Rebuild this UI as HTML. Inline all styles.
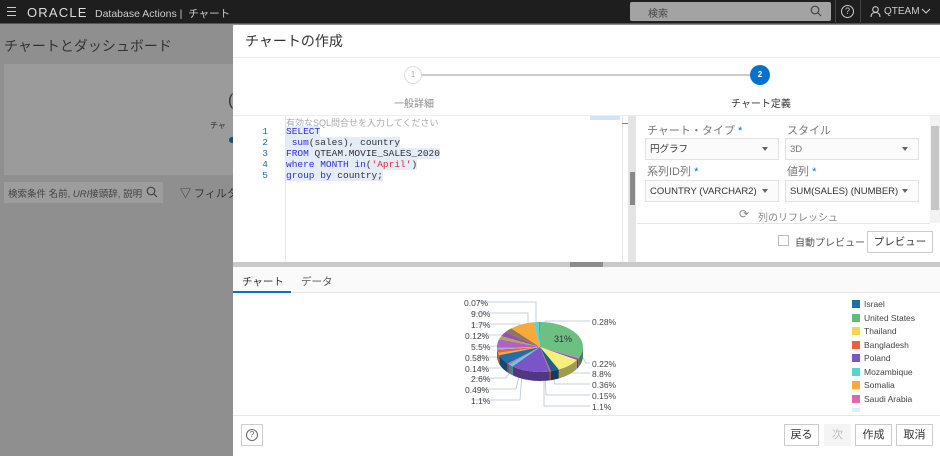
<!DOCTYPE html>
<html><head><meta charset="utf-8">
<style>
*{box-sizing:border-box;margin:0;padding:0}
body{width:940px;height:456px;overflow:hidden;background:#8f8f8f;font-family:"Liberation Sans","Noto Sans CJK JP",sans-serif;position:relative;color:#333}
.a{position:absolute}
.top{left:0;top:0;width:940px;height:24px;background:#1e1e1e;border-bottom:1px solid #555}
.mono{font-family:"Liberation Mono","Noto Sans CJK JP",monospace;font-size:9.5px}
.sel{position:absolute;height:22px;border:1px solid #e2e2e2;background:#fbfbfb;font-size:9.5px;color:#333;padding:5px 4px;line-height:12px;white-space:nowrap;overflow:hidden}
.sel:after{content:"";position:absolute;right:10px;top:8px;border:3.5px solid transparent;border-top:4.5px solid #666}
.lbl{position:absolute;font-size:11px;color:#777}
.star{color:#0572ce}
.btn{position:absolute;top:424px;height:22px;border:1px solid #ccc;background:#fff;font-size:11px;text-align:center;line-height:20px;color:#333}
.lg{position:absolute;left:852px;font-size:8.5px;color:#444}
.lg i{display:inline-block;width:8px;height:8px;margin-right:4px;vertical-align:-1px}
.pl{position:absolute;font-size:8.5px;color:#444}
</style></head><body>
<div class="a top"></div>
<div class="a" style="left:7px;top:7px;width:9px;height:9px;border-top:1.5px solid #ccc;border-bottom:1.5px solid #ccc"><div style="margin-top:2.5px;border-top:1.5px solid #ccc"></div></div>
<div class="a" style="left:27px;top:5px;color:#ddd;font-size:13px;letter-spacing:1.2px">ORACLE</div>
<div class="a" style="left:95px;top:6px;color:#ccc;font-size:10.5px">Database Actions |&nbsp; チャート</div>
<div class="a" style="left:630px;top:2px;width:201px;height:19px;background:#a3a3a3;border-radius:2px;font-size:10px;color:#444;padding:3px 18px">検索</div>
<svg class="a" style="left:810px;top:5px" width="12" height="12"><circle cx="5" cy="5" r="3.8" fill="none" stroke="#444" stroke-width="1.2"/><line x1="8" y1="8" x2="11" y2="11" stroke="#444" stroke-width="1.2"/></svg>
<div class="a" style="left:835px;top:0;width:1px;height:24px;background:#444"></div>
<div class="a" style="left:860px;top:0;width:1px;height:24px;background:#444"></div>
<div class="a" style="left:841px;top:5px;width:13px;height:13px;border:1.3px solid #ccc;border-radius:50%;font-size:9px;color:#ccc;text-align:center;line-height:11px">?</div>
<svg class="a" style="left:870px;top:6px" width="11" height="12"><circle cx="5.5" cy="3.5" r="2.8" fill="none" stroke="#ccc" stroke-width="1.1"/><path d="M1 11 Q1 6.5 5.5 6.5 Q10 6.5 10 11" fill="none" stroke="#ccc" stroke-width="1.1"/></svg>
<div class="a" style="left:884px;top:6px;color:#ccc;font-size:10px">QTEAM</div>
<svg class="a" style="left:921px;top:8px" width="10" height="7"><path d="M1 1 L5 5 L9 1" fill="none" stroke="#ccc" stroke-width="1.1"/></svg>

<div class="a" style="left:4px;top:36px;font-size:14px;color:#333">チャートとダッシュボード</div>
<div class="a" style="left:4px;top:64px;width:229px;height:111px;background:#9b9b9b"></div>
<div class="a" style="left:228px;top:92px;font-size:16px;color:#333">(</div>
<div class="a" style="left:210px;top:120px;font-size:8px;color:#333">チャ</div>
<div class="a" style="left:229px;top:137px;width:6px;height:6px;border-radius:50%;background:#1a4f70"></div>
<div class="a" style="left:4px;top:182px;width:159px;height:21px;background:#9d9d9d;font-size:9.5px;color:#444;padding:4px 4px">検索条件 名前, <i>URI</i>接頭辞, 説明</div>
<svg class="a" style="left:146px;top:186px" width="12" height="12"><circle cx="5" cy="5" r="3.8" fill="none" stroke="#444" stroke-width="1.2"/><line x1="8" y1="8" x2="11" y2="11" stroke="#444" stroke-width="1.2"/></svg>
<div class="a" style="left:180px;top:185px;font-size:11px;color:#333">▽ フィルタ</div>

<div class="a" style="left:233px;top:25px;width:707px;height:431px;background:#fff"></div>
<div class="a" style="left:245px;top:31px;font-size:14px;color:#333">チャートの作成</div>
<div class="a" style="left:233px;top:57px;width:707px;height:1px;background:#eee"></div>
<div class="a" style="left:420px;top:74px;width:334px;height:2px;background:#ccc"></div>
<div class="a" style="left:404px;top:66px;width:18px;height:18px;border-radius:50%;border:1.5px solid #ddd;background:#fff;font-size:8px;color:#aaa;text-align:center;line-height:15px">1</div>
<div class="a" style="left:750px;top:65px;width:20px;height:20px;border-radius:50%;background:#0572ce;font-size:8px;color:#fff;text-align:center;line-height:20px;font-weight:bold">2</div>
<div class="a" style="left:394px;top:95px;font-size:10px;color:#888">一般詳細</div>
<div class="a" style="left:731px;top:95px;font-size:10px;color:#333">チャート定義</div>
<div class="a" style="left:233px;top:115px;width:707px;height:1px;background:#eee"></div>

<div class="a" style="left:285px;top:116px;width:1px;height:146px;background:#e6e6e6"></div>
<div class="a" style="left:622px;top:116px;width:1px;height:146px;background:#e6e6e6"></div>
<div class="a" style="left:590px;top:116px;width:30px;height:4px;background:#cfe4fb"></div>
<div class="a" style="left:622px;top:123px;width:6px;height:1px;background:#888"></div>
<div class="a" style="left:628px;top:116px;width:8px;height:146px;background:#e4e4e4"></div>
<div class="a" style="left:630px;top:172px;width:5px;height:33px;background:#888"></div>
<div class="a mono" style="left:286px;top:116px;color:#aaa;font-family:'Liberation Sans','Noto Sans CJK JP',sans-serif;font-size:9px">有効なSQL問合せを入力してください</div>
<div class="a mono" style="left:260px;top:126px;line-height:11px;color:#2c6b9a;text-align:right;width:8px">1<br>2<br>3<br>4<br>5</div>
<div class="a mono" style="left:286px;top:126px;line-height:11px;color:#333;white-space:pre"><span style="background:#e4ecf6;color:#2b2bf0">SELECT</span>
<span style="background:#e4ecf6"> <span style="color:#2b2bf0">sum</span>(sales), country</span>
<span style="background:#e4ecf6"><span style="color:#2b2bf0">FROM</span> QTEAM.MOVIE_SALES_2020</span>
<span style="background:#e4ecf6"><span style="color:#2b2bf0">where MONTH in</span>(<span style="color:#e0282d">'April'</span>)</span>
<span style="background:#e4ecf6"><span style="color:#2b2bf0">group by</span> country;</span></div>

<div class="lbl" style="left:647px;top:122px">チャート・タイプ <span class="star">*</span></div>
<div class="lbl" style="left:787px;top:122px">スタイル</div>
<div class="sel" style="left:645px;top:138px;width:134px">円グラフ</div>
<div class="sel" style="left:785px;top:138px;width:134px;color:#777">3D</div>
<div class="lbl" style="left:647px;top:163px">系列ID列 <span class="star">*</span></div>
<div class="lbl" style="left:787px;top:163px">値列 <span class="star">*</span></div>
<div class="sel" style="left:645px;top:180px;width:134px">COUNTRY (VARCHAR2)</div>
<div class="sel" style="left:785px;top:180px;width:134px">SUM(SALES) (NUMBER)</div>
<div class="a" style="left:739px;top:207px;font-size:12px;color:#888">⟳</div>
<div class="a" style="left:758px;top:209px;font-size:10px;color:#888">列のリフレッシュ</div>
<div class="a" style="left:637px;top:223px;width:293px;height:1px;background:#e6e6e6"></div>
<div class="a" style="left:930px;top:116px;width:10px;height:107px;background:#f2f2f2"></div>
<div class="a" style="left:931px;top:126px;width:8px;height:84px;background:#c6c6c6"></div>
<div class="a" style="left:778px;top:235px;width:11px;height:11px;border:1px solid #bbb;background:#fff"></div>
<div class="a" style="left:795px;top:234px;font-size:10px;color:#555">自動プレビュー</div>
<div class="a" style="left:867px;top:231px;width:66px;height:22px;border:1px solid #ccc;font-size:10.5px;text-align:center;line-height:20px;color:#333">プレビュー</div>

<div class="a" style="left:233px;top:262px;width:707px;height:5px;background:#c9c9c9"></div>
<div class="a" style="left:570px;top:262px;width:33px;height:5px;background:#8c8c8c"></div>

<div class="a" style="left:233px;top:267px;width:707px;height:26px;background:#fafafa;border-bottom:1px solid #e6e6e6"></div>
<div class="a" style="left:242px;top:274px;font-size:10.5px;color:#333">チャート</div>
<div class="a" style="left:233px;top:291px;width:58px;height:2px;background:#0572ce"></div>
<div class="a" style="left:301px;top:274px;font-size:10.5px;color:#555">データ</div>

<svg class="a" id="pie" style="left:0;top:0" width="940" height="456"></svg>
<div class="pl" style="left:464px;top:298px">0.07%</div>
<div class="pl" style="left:471px;top:309px">9.0%</div>
<div class="pl" style="left:471px;top:320px">1.7%</div>
<div class="pl" style="left:465px;top:331px">0.12%</div>
<div class="pl" style="left:471px;top:342px">5.5%</div>
<div class="pl" style="left:465px;top:353px">0.58%</div>
<div class="pl" style="left:465px;top:364px">0.14%</div>
<div class="pl" style="left:471px;top:374px">2.6%</div>
<div class="pl" style="left:465px;top:385px">0.49%</div>
<div class="pl" style="left:471px;top:396px">1.1%</div>
<div class="pl" style="left:592px;top:317px">0.28%</div>
<div class="pl" style="left:592px;top:359px">0.22%</div>
<div class="pl" style="left:592px;top:369px">8.8%</div>
<div class="pl" style="left:592px;top:380px">0.36%</div>
<div class="pl" style="left:592px;top:391px">0.15%</div>
<div class="pl" style="left:592px;top:402px">1.1%</div>
<div class="pl" style="left:554px;top:334px;font-size:9px;color:#333">31%</div>

<div class="lg" style="top:299px"><i style="background:#1f6fa8"></i>Israel</div>
<div class="lg" style="top:313px"><i style="background:#5dbf74"></i>United States</div>
<div class="lg" style="top:326px"><i style="background:#f7d54a"></i>Thailand</div>
<div class="lg" style="top:340px"><i style="background:#e8603c"></i>Bangladesh</div>
<div class="lg" style="top:353px"><i style="background:#7a55c8"></i>Poland</div>
<div class="lg" style="top:367px"><i style="background:#55d6d4"></i>Mozambique</div>
<div class="lg" style="top:380px"><i style="background:#f9a93a"></i>Somalia</div>
<div class="lg" style="top:394px"><i style="background:#e066b0"></i>Saudi Arabia</div>
<div class="lg" style="top:407px;height:5px;overflow:hidden"><i style="background:#ddeefa"></i></div>

<div class="a" style="left:233px;top:415px;width:707px;height:1px;background:#e6e6e6"></div>
<div class="a" style="left:241px;top:424px;width:22px;height:22px;border:1px solid #ccc"></div>
<div class="a" style="left:246px;top:429px;width:12px;height:12px;border:1px solid #666;border-radius:50%;font-size:8px;text-align:center;line-height:10px;color:#555">?</div>
<div class="btn" style="left:784px;width:35px">戻る</div>
<div class="btn" style="left:824px;width:27px;background:#f4f4f4;border-color:#f4f4f4;color:#bbb">次</div>
<div class="btn" style="left:855px;width:37px">作成</div>
<div class="btn" style="left:896px;width:37px">取消</div>

<script>
var s=document.getElementById('pie');
var cx=540,cy=347,rx=43,ry=25,d=9;
var sl=[[31,'#6cc182'],[.5,'#e066b0'],[1,'#7a55c8'],[8.8,'#f6ef7a'],[3,'#1f5f8b'],[.5,'#e8603c'],[14,'#7a55c8'],[1.5,'#55d6d4'],[1,'#e066b0'],[6,'#1f6fa8'],[1.5,'#f9a93a'],[2,'#e8603c'],[1,'#9fb0c0'],[5.5,'#b25fc9'],[2,'#a8b23a'],[3,'#9a4fb8'],[3,'#8c7a55'],[9,'#f9a93a'],[1.7,'#55d6d4'],[.5,'#888']];
var tot=0;sl.forEach(function(a){tot+=a[0]});
function pt(t,dy){return [cx+rx*Math.sin(t),cy-ry*Math.cos(t)+(dy||0)];}
function dk(c){var n=parseInt(c.slice(1),16),r=(n>>16)*.65,g=((n>>8)&255)*.65,b=(n&255)*.65;return 'rgb('+(r|0)+','+(g|0)+','+(b|0)+')';}
var h='',a=0,tops='';
var lines=[[478,302,536,302,536,323],[472,313,528,313,528,325],[472,324,520,324,520,330],[478,335,516,335],[472,346,508,346],[478,357,504,357],[478,368,504,368],[472,378,506,378,513,368],[478,389,516,389,520,372],[472,400,520,400,522,373],[590,321,545,321,545,324],[590,363,586,363,582,356],[590,373,572,373,570,370],[590,384,555,384,552,373],[590,395,546,395,545,376],[590,406,544,406,544,376]];
lines.forEach(function(l){var p='M'+l[0]+' '+l[1];for(var i=2;i<l.length;i+=2)p+=' L'+l[i]+' '+l[i+1];h+='<path d="'+p+'" fill="none" stroke="#b8c4d0" stroke-width="0.8"/>';});
sl.forEach(function(x){
 var a0=a/tot*2*Math.PI,a1=(a+x[0])/tot*2*Math.PI;a+=x[0];
 var b0=Math.max(a0,Math.PI/2),b1=Math.min(a1,3*Math.PI/2);
 if(b1>b0){var p='',n=12;for(var i=0;i<=n;i++){var q=pt(b0+(b1-b0)*i/n);p+=(i?'L':'M')+q[0].toFixed(1)+' '+q[1].toFixed(1);}
  for(var i=n;i>=0;i--){var q=pt(b0+(b1-b0)*i/n,d);p+='L'+q[0].toFixed(1)+' '+q[1].toFixed(1);}
  h+='<path d="'+p+'Z" fill="'+dk(x[1])+'"/>';}
 var p0=pt(a0),p1=pt(a1),lg=(a1-a0)>Math.PI?1:0;
 tops+='<path d="M'+cx+' '+cy+'L'+p0[0].toFixed(1)+' '+p0[1].toFixed(1)+'A'+rx+' '+ry+' 0 '+lg+' 1 '+p1[0].toFixed(1)+' '+p1[1].toFixed(1)+'Z" fill="'+x[1]+'"/>';
});
s.innerHTML=h+tops;
</script>
</body></html>
